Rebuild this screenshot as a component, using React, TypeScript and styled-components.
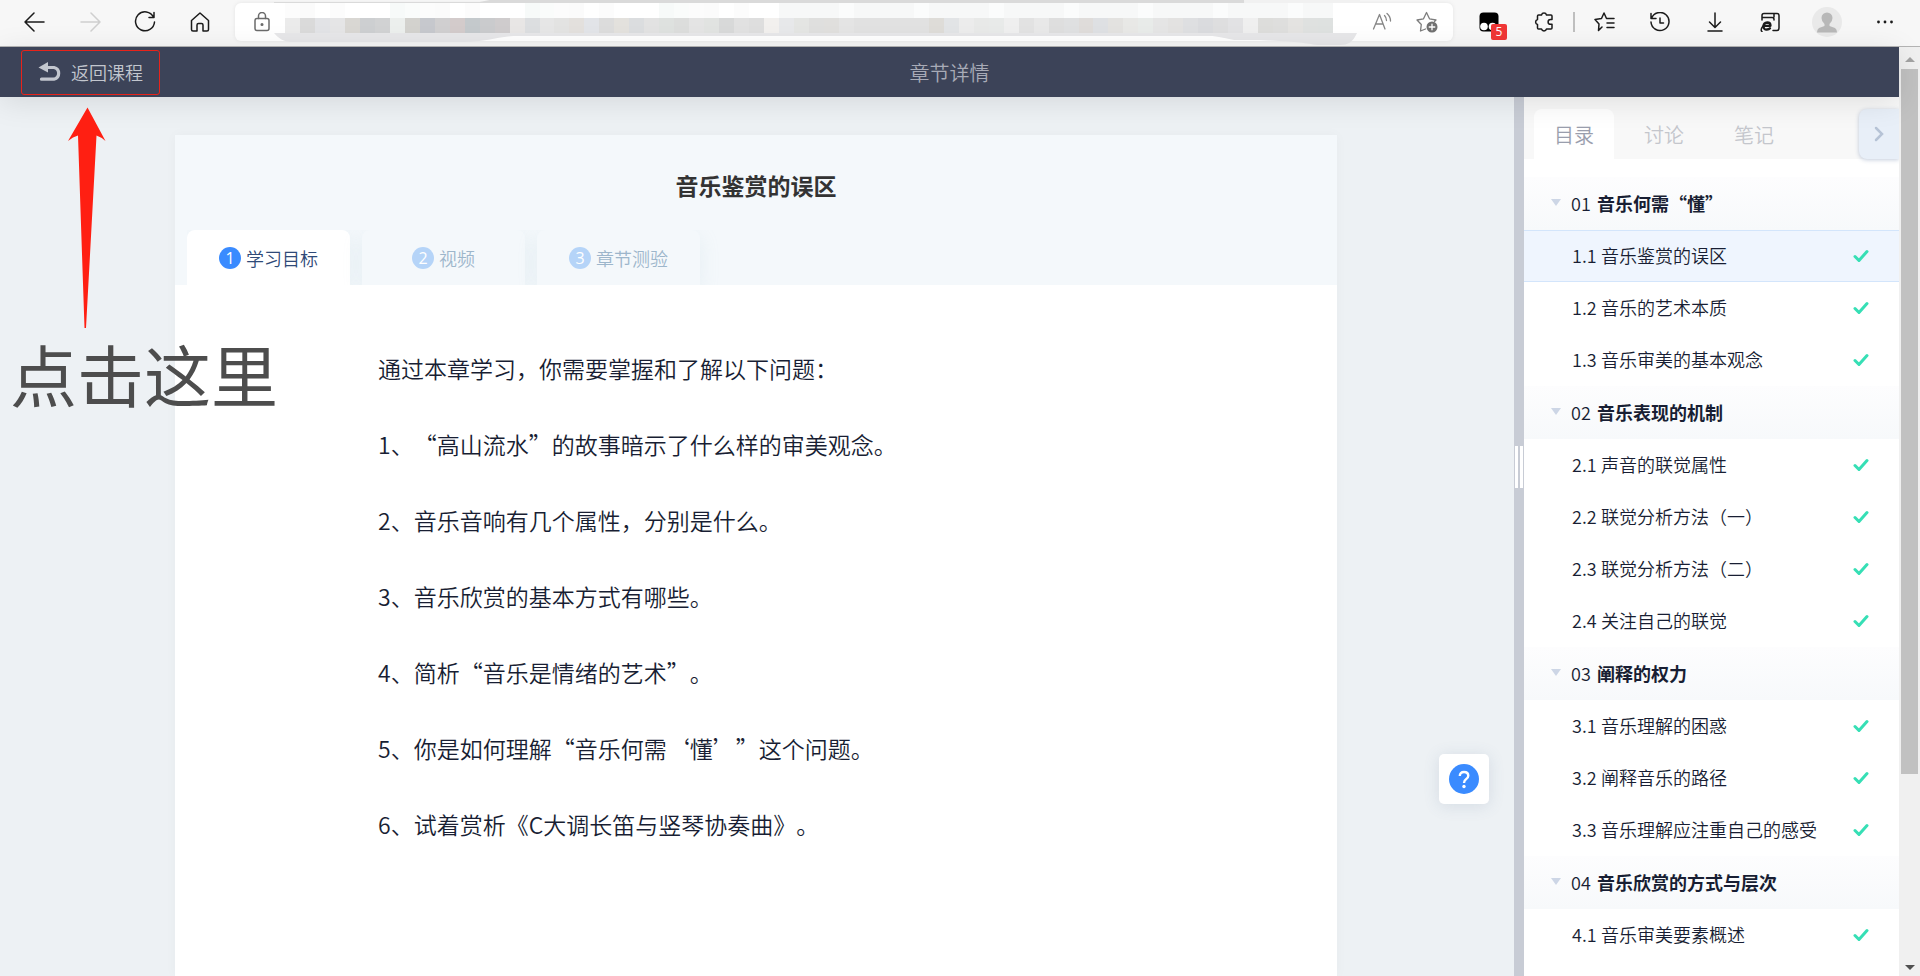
import React from "react";
import styled, { createGlobalStyle } from "styled-components";

const GlobalStyle = createGlobalStyle`
  * { box-sizing: border-box; }
  body {
    margin: 0;
    font-family: "Noto Sans CJK SC", "Noto Sans", sans-serif;
    font-weight: 350;
    text-spacing-trim: space-all;
    color: #181e33;
    overflow: hidden;
  }
  button { font: inherit; color: inherit; background: none; border: 0; padding: 0; cursor: pointer; }
  ul, ol { list-style: none; margin: 0; padding: 0; }
  h1, h2, h3, p { margin: 0; }
`;

const Window = styled.div`
  display: flex;
  flex-direction: column;
  height: 100vh;
  overflow: hidden;
`;

/* ---------- browser toolbar ---------- */

const Toolbar = styled.div`
  display: flex;
  align-items: center;
  flex: none;
  height: 47px;
  padding: 0 8px 2px 7px;
  background: #f7f7f7;
  border-bottom: 1px solid #b4b4b4;
`;

const ToolButton = styled.button<{ $width?: number; $color?: string }>`
  display: flex;
  align-items: center;
  justify-content: center;
  flex: none;
  width: ${(p) => p.$width ?? 55}px;
  height: 36px;
  color: ${(p) => p.$color ?? "#1b1b1b"};
  position: relative;
`;

const AddressBar = styled.div`
  display: flex;
  align-items: center;
  flex: 1;
  min-width: 0;
  height: 38px;
  margin: 0 8px;
  padding: 0 4px 0 17px;
  background: #fff;
  border-radius: 6px;
  box-shadow: 0 0 4px rgba(0, 0, 0, 0.08);
`;

const Mosaic = styled.svg`
  flex: 1;
  min-width: 0;
  height: 46px;
  margin-left: 2px;
`;

const ToolDivider = styled.span`
  flex: none;
  width: 2px;
  height: 20px;
  margin: 0 2px;
  background: #bfbfbf;
`;

const Badge = styled.span`
  position: absolute;
  left: 30px;
  top: 20px;
  width: 16px;
  height: 16px;
  border-radius: 2px;
  background: #f03636;
  color: #fff;
  font: 400 12px/16px "Open Sans", sans-serif;
  text-align: center;
`;

const Avatar = styled.span`
  display: flex;
  align-items: flex-end;
  justify-content: center;
  width: 30px;
  height: 30px;
  border-radius: 50%;
  background: #e9e9e9;
  padding-bottom: 4px;
`;

/* ---------- page frame ---------- */

const Viewport = styled.div`
  display: flex;
  flex: 1;
  min-height: 0;
`;

const Page = styled.div`
  display: flex;
  flex-direction: column;
  flex: 1;
  min-width: 0;
  position: relative;
`;

const ScrollTrack = styled.div`
  display: flex;
  flex-direction: column;
  align-items: center;
  flex: none;
  width: 21px;
  padding: 8px 0 6px;
  background: #f0f0f0;
`;

const ScrollThumb = styled.div`
  width: 17px;
  height: 77%;
  margin-top: 7px;
  background: #c1c1c1;
`;

const ScrollArrow = styled.span<{ $down?: boolean }>`
  border: 5px solid transparent;
  border-bottom-color: ${(p) => (p.$down ? "transparent" : "#a3a3a3")};
  border-top-color: ${(p) => (p.$down ? "#505050" : "transparent")};
  border-top-width: ${(p) => (p.$down ? 5 : 0)}px;
  border-bottom-width: ${(p) => (p.$down ? 0 : 5)}px;
  margin-top: ${(p) => (p.$down ? "auto" : "2px")};
`;

const Header = styled.header`
  display: grid;
  grid-template-columns: 1fr auto 1fr;
  align-items: center;
  flex: none;
  height: 50px;
  padding: 0 21px;
  background: #3c4358;
  box-shadow: 0 5px 30px rgba(0, 0, 0, 0.1);
  position: relative;
  z-index: 1;
`;

const BackButton = styled.button`
  display: flex;
  align-items: center;
  justify-self: start;
  gap: 8px;
  height: 45px;
  padding: 0 16px;
  border: 1px solid #e8231a;
  border-radius: 3px;
  color: #c2c6ce;
  font-size: 18px;
  line-height: 24px;
`;

const HeaderTitle = styled.h1`
  padding-top: 2px;
  font-size: 20px;
  line-height: 28px;
  font-weight: 350;
  color: #a8abb7;
`;

const Columns = styled.div`
  display: flex;
  flex: 1;
  min-height: 0;
`;

/* ---------- lesson ---------- */

const Main = styled.main`
  flex: 1;
  min-width: 0;
  padding: 38px 26px 0 24px;
  background: #edf1f4;
  overflow: hidden;
  position: relative;
`;

const Card = styled.article`
  display: flex;
  flex-direction: column;
  max-width: 1162px;
  height: 100%;
  margin: 0 auto;
  background: #fff;
  box-shadow: 0 0 12px rgba(0, 0, 0, 0.03);
`;

const CardHead = styled.div`
  display: flex;
  flex-direction: column;
  justify-content: space-between;
  height: 150px;
  padding: 33px 12px 0;
  background: #f4f8fb;
`;

const LessonTitle = styled.h2`
  font-size: 23px;
  line-height: 34px;
  font-weight: 700;
  text-align: center;
  color: #333;
`;

const StepTabs = styled.div`
  display: flex;
  gap: 12px;
  overflow: hidden;
  padding-right: 20px;
`;

const StepTab = styled.button<{ $active?: boolean }>`
  display: flex;
  align-items: center;
  justify-content: center;
  gap: 5px;
  width: 163px;
  height: 55px;
  border-radius: 8px 8px 0 0;
  background: ${(p) => (p.$active ? "#fff" : "#f4f8fb")};
  color: ${(p) => (p.$active ? "#2f4a78" : "#9db6cb")};
  font-size: 18px;
  line-height: 24px;
  box-shadow: 0 6px 20px rgba(160, 190, 205, 0.16);
`;

const StepNumber = styled.span<{ $active?: boolean }>`
  width: 22px;
  height: 22px;
  border-radius: 50%;
  background: ${(p) => (p.$active ? "#3a8bff" : "#b5d4f8")};
  color: #fff;
  font: 400 16px/22px "Open Sans", sans-serif;
  text-align: center;
`;

const Body = styled.div`
  display: flex;
  flex-direction: column;
  gap: 38px;
  padding: 64px 203px 0;
  font-size: 23px;
  line-height: 38px;
`;

const HelpButton = styled.button`
  display: flex;
  align-items: center;
  justify-content: center;
  position: absolute;
  right: 25px;
  bottom: 172px;
  width: 50px;
  height: 50px;
  border-radius: 5px;
  background: #fff;
  box-shadow: 0 2px 16px rgba(90, 110, 150, 0.16);
`;

/* ---------- splitter and side panel ---------- */

const Splitter = styled.div`
  display: flex;
  justify-content: center;
  gap: 2px;
  flex: none;
  width: 10px;
  padding-top: 349px;
  background: #c8ccd5;
`;

const Grip = styled.span`
  width: 3px;
  height: 42px;
  background: #fff;
`;

const Side = styled.aside`
  flex: none;
  width: 375px;
  background: #fff;
  overflow: hidden;
`;

const SideTabs = styled.div`
  display: flex;
  gap: 10px;
  height: 62px;
  padding: 12px 0 0 10px;
  background: #f8f8f8;
`;

const SideTab = styled.button<{ $active?: boolean }>`
  width: 80px;
  height: 50px;
  padding-top: 2px;
  border-radius: 8px 8px 0 0;
  background: ${(p) => (p.$active ? "#fff" : "transparent")};
  color: ${(p) => (p.$active ? "#9a9ead" : "#c4c6cc")};
  font-size: 20px;
  line-height: 28px;
`;

const Collapse = styled.button`
  display: flex;
  align-items: center;
  justify-content: center;
  width: 40px;
  height: 50px;
  margin-left: auto;
  border-radius: 8px 0 0 8px;
  background: #e8eff8;
  box-shadow: 0 1px 4px rgba(60, 90, 140, 0.3);
  color: #b6c3d6;
`;

const Chapters = styled.ol`
  padding-top: 18px;
`;

const ChapterHead = styled.button`
  display: flex;
  align-items: center;
  width: 100%;
  height: 53px;
  padding: 0 0 2px 27px;
  background: linear-gradient(#fdfdfe, #f7f9fb);
  font-size: 18px;
  line-height: 24px;
`;

const Caret = styled.span`
  width: 10px;
  margin-right: 10px;
  border: 5px solid transparent;
  border-top: 7px solid #cdd6e6;
  border-bottom: 0;
`;

const ChapterNumber = styled.span`
  width: 26px;
  text-align: left;
`;

const ChapterName = styled.h3`
  font-size: 18px;
  line-height: 24px;
  font-weight: 700;
`;

const Lesson = styled.a<{ $active?: boolean }>`
  display: flex;
  align-items: center;
  height: 52px;
  padding: 0 30px 2px 48px;
  border: solid ${(p) => (p.$active ? "#d3e5fb" : "transparent")};
  border-width: 1px 0;
  background: ${(p) => (p.$active ? "#eff5fe" : "#fff")};
  color: inherit;
  text-decoration: none;
  font-size: 18px;
  line-height: 24px;
`;

const LessonNumber = styled.span`
  width: 29px;
`;

const Tick = styled.svg`
  margin-left: auto;
`;

/* ---------- annotation ---------- */

const Annotation = styled.div`
  position: absolute;
  left: 10px;
  top: 60px;
  z-index: 2;
  pointer-events: none;
  color: #4d4d4d;
  font-size: 67px;
  font-weight: 400;
  line-height: 88px;
`;

const Arrow = styled.svg`
  display: block;
  margin-left: 57px;
`;

const smudge = [
  "#ebebeb", "#dadada", "#e2e3e6", "#e5e5e6", "#d9d7d3", "#cdcfd1", "#d1d2d3", "#ecefed",
  "#d3d2ce", "#c6c8cd", "#d0cfd0", "#d3cbcb", "#c4c9cc", "#cacbcd", "#cfcccd", "#e8e6e5",
  "#dcdee0", "#e6e6e6", "#e3e3e2", "#e3e0dd", "#e2e4e8", "#dcdcdc", "#e3e1dd", "#dbdddf",
  "#e2e2e2", "#dee1df", "#dcdddc", "#e4e4e4", "#e1e3e1", "#d8d9d9", "#e1e1e1", "#dedede",
  "#f2f0ee", "#e7e8ea", "#e4e5e3", "#dfdfde", "#e0dfdd", "#e4e4e4", "#e1e1e1", "#e1e1e1",
  "#e1e1e1", "#e1e1e1", "#e1e1e1", "#dedcd8", "#e2e4e6", "#ececec", "#e8e9e8", "#e8eae9",
  "#efefef", "#e2e2e2", "#e8e8e8", "#dedede", "#dfe0e1", "#dfdcda", "#dee0e3", "#e3e2e0",
  "#e8e8e6", "#e8ebe9", "#e5e5e5", "#e3e2e1", "#dedfe1", "#dadbde", "#dededf", "#e2e2e4",
  "#efefef", "#dddddb", "#dededd", "#e4e3e1", "#dfe1e0", "#dee1e0",
];
const glow = ["#fcfcfc", "#fbfbfb", "#ffffff", "#fcfcfc", "#ffffff", "#ffffff", "#ffffff", "#f7faf9", "#fafcfb"];

const Hidden = () => (
  <Mosaic viewBox="0 -1 1088 46" preserveAspectRatio="none" aria-hidden="true">
    <path d="M0 2H206L216 0H972V3H0Z" fill="#dadada" />
    <path d="M972 0H1090V3H972Z" fill="#f1f1f1" />
    {smudge.map((c, i) => (
      <g key={i} shapeRendering="crispEdges">
        <rect x={11 + i * 15} y={3} width={15} height={15} fill={i > 32 ? (i % 5 === 2 ? "#fbfcfc" : "#f7f8f8") : glow[i % 9]} />
        <rect x={11 + i * 15} y={18} width={15} height={15} fill={c} />
      </g>
    ))}
    <path d="M0 33H1085C1081 42 1076 45 1068 45H1045C1030 43 1022 40 962 40C955 39 950 37 940 36H240C222 37 212 42 190 42H18C10 42 4 38 0 33Z" fill="#e7e7e9" />
  </Mosaic>
);

const stroke = { fill: "none", stroke: "currentColor", strokeWidth: 1.5, strokeLinecap: "round", strokeLinejoin: "round" } as const;

const Check = () => (
  <Tick width="16" height="14" viewBox="0 0 16 14" aria-label="已完成">
    <path d="M2 8.5L6 12.5L14 3.5" fill="none" stroke="#36dfb5" strokeWidth="3" strokeLinecap="round" />
  </Tick>
);

type Item = { no: string; name: string };
const chapters: (Item & { lessons: Item[] })[] = [
  { no: "01", name: "音乐何需“懂”", lessons: [
    { no: "1.1", name: "音乐鉴赏的误区" },
    { no: "1.2", name: "音乐的艺术本质" },
    { no: "1.3", name: "音乐审美的基本观念" },
  ] },
  { no: "02", name: "音乐表现的机制", lessons: [
    { no: "2.1", name: "声音的联觉属性" },
    { no: "2.2", name: "联觉分析方法（一）" },
    { no: "2.3", name: "联觉分析方法（二）" },
    { no: "2.4", name: "关注自己的联觉" },
  ] },
  { no: "03", name: "阐释的权力", lessons: [
    { no: "3.1", name: "音乐理解的困惑" },
    { no: "3.2", name: "阐释音乐的路径" },
    { no: "3.3", name: "音乐理解应注重自己的感受" },
  ] },
  { no: "04", name: "音乐欣赏的方式与层次", lessons: [{ no: "4.1", name: "音乐审美要素概述" }] },
];

const steps = ["学习目标", "视频", "章节测验"];
const paragraphs = [
  "通过本章学习，你需要掌握和了解以下问题：",
  "1、“高山流水”的故事暗示了什么样的审美观念。",
  "2、音乐音响有几个属性，分别是什么。",
  "3、音乐欣赏的基本方式有哪些。",
  "4、简析“音乐是情绪的艺术”。",
  "5、你是如何理解“音乐何需‘懂’”这个问题。",
  "6、试着赏析《C大调长笛与竖琴协奏曲》。",
];

const BrowserBar = () => (
  <Toolbar>
    <ToolButton aria-label="后退">
      <svg width="22" height="20" viewBox="0 0 22 20" {...stroke}><path d="M10 1L1 10L10 19M1 10H20" /></svg>
    </ToolButton>
    <ToolButton aria-label="前进" $color="#cfcfcf">
      <svg width="22" height="20" viewBox="0 0 22 20" {...stroke}><path d="M12 1L21 10L12 19M21 10H2" /></svg>
    </ToolButton>
    <ToolButton aria-label="刷新">
      <svg width="22" height="22" viewBox="0 0 22 22" {...stroke}><path d="M19.5 6A9.5 9.5 0 1 0 20.5 11M20 1.5V6.5H15" /></svg>
    </ToolButton>
    <ToolButton aria-label="主页">
      <svg width="20" height="20" viewBox="0 0 20 20" {...stroke}><path d="M1.5 8.5L10 1L18.5 8.5V17.5Q18.5 19 17 19H13V13Q13 11.5 11.5 11.5H8.5Q7 11.5 7 13V19H3Q1.5 19 1.5 17.5Z" /></svg>
    </ToolButton>
    <AddressBar>
      <svg width="20" height="20" viewBox="0 0 20 20" {...stroke} stroke="#6b6b6b">
        <rect x="3" y="6.5" width="14" height="12" rx="2" />
        <path d="M6.5 6.5V4A3.5 3.5 0 0 1 13.5 4V6.5" />
        <circle cx="10" cy="12.5" r="0.8" fill="#6b6b6b" />
      </svg>
      <Hidden />
      <ToolButton aria-label="朗读此页" $width={44} $color="#868686">
        <svg width="21" height="20" viewBox="0 0 21 20" {...stroke} strokeWidth={1.3}>
          <path d="M1.5 17L7.5 2.5L13 17M3.5 12H11M12.500 3.500Q14.500 5.500 14.500 8.500M15 1.500Q18.500 4.500 18.500 9" />
        </svg>
      </ToolButton>
      <ToolButton aria-label="收藏此页" $width={45} $color="#7d7d7d">
        <svg width="22" height="22" viewBox="0 0 22 22" {...stroke} strokeWidth={1.3}>
          <path d="M9.5 18L4.5 20L5.3 13.5L1 9L7.5 7.8L10.5 1.5L13.5 7.8L20 9L18.5 10.5" />
          <circle cx="16" cy="16" r="5.5" fill="#717171" stroke="none" />
          <path d="M16 13.2V18.8M13.2 16H18.8" stroke="#fff" />
        </svg>
      </ToolButton>
    </AddressBar>
    <ToolButton aria-label="脚本扩展">
      <svg width="20" height="20" viewBox="0 0 20 20">
        <rect x="0.5" y="0.5" width="19" height="19" rx="4" fill="#000" />
        <circle cx="5" cy="14.5" r="3.8" fill="#fff" />
        <circle cx="13.5" cy="14.5" r="3.8" fill="#fff" />
      </svg>
      <Badge>5</Badge>
    </ToolButton>
    <ToolButton aria-label="扩展">
      <svg width="20" height="20" viewBox="0 0 20 20" {...stroke}>
        <path d="M4.500 3H7.500A2.600 2.600 0 0 1 12.500 3H17Q18 3 18 4V7.500H16.500A2.400 2.400 0 0 0 16.500 12.300H18V16Q18 17 17 17H12.500A2.600 2.600 0 0 1 7.500 17H4.500Q3.500 17 3.500 16V12.500A2.600 2.600 0 0 1 3.500 7.500V4Q3.500 3 4.500 3Z" />
      </svg>
    </ToolButton>
    <ToolDivider />
    <ToolButton aria-label="收藏夹">
      <svg width="22" height="20" viewBox="0 0 22 20" {...stroke}>
        <path d="M8 15L4.500 18.500L5 12L1 7.500L7.500 6.500L10 1L12.500 6.500H20M13 11H20M13 15.500H20" />
      </svg>
    </ToolButton>
    <ToolButton aria-label="历史记录">
      <svg width="22" height="20" viewBox="0 0 22 20" {...stroke}>
        <path d="M2.500 6.500A9 9 0 1 1 2 10M2 1.500V6.500H7M11 6V11H14.500" />
      </svg>
    </ToolButton>
    <ToolButton aria-label="下载">
      <svg width="16" height="20" viewBox="0 0 16 20" {...stroke}><path d="M8 1V15M2.500 10L8 15.500L13.500 10M1 19H15" /></svg>
    </ToolButton>
    <ToolButton aria-label="IE 模式">
      <svg width="20" height="20" viewBox="0 0 20 20" {...stroke}>
        <path d="M2 8V3.500Q2 1.500 4 1.500H17Q19 1.500 19 3.500V16Q19 18.500 17 18.500H13M2 5.500H12Q14 5.500 14 7.500V8M14 1.500V5" />
        <path d="M3.500 13.800H10.500Q10.500 10.500 7.300 10.500Q3.500 10.800 3.500 14.500Q3.800 18 7 17.500Q9 17.500 10 16.300" strokeWidth="2.300" />
        <path d="M2 19.500Q0 18 3 14" />
      </svg>
    </ToolButton>
    <ToolButton aria-label="个人资料" $width={60}>
      <Avatar>
        <svg width="22" height="21" viewBox="0 0 22 21" fill="#b8b8b8">
          <path d="M11 0.500A5.500 5.500 0 0 1 16.500 6Q16.500 9.500 13.500 12V14L19 16Q21 17 21 20.500H1Q1 17 3 16L8.500 14V12Q5.500 9.500 5.500 6A5.500 5.500 0 0 1 11 0.500Z" />
        </svg>
      </Avatar>
    </ToolButton>
    <ToolButton aria-label="更多">
      <svg width="18" height="4" viewBox="0 0 18 4" fill="currentColor"><circle cx="2.500" cy="2" r="1.400" /><circle cx="9" cy="2" r="1.400" /><circle cx="15.500" cy="2" r="1.400" /></svg>
    </ToolButton>
  </Toolbar>
);

export default function App() {
  return (
    <Window>
      <GlobalStyle />
      <BrowserBar />
      <Viewport>
        <Page>
          <Header>
            <BackButton>
              <svg width="25" height="20" viewBox="0 0 25 20">
                <path d="M0.500 5.500L10 0V10.500Z" fill="currentColor" />
                <path d="M8 5.500H16A6 6 0 0 1 16 17.200H3.500" fill="none" stroke="currentColor" strokeWidth="3.200" strokeLinecap="round" />
              </svg>
              返回课程
            </BackButton>
            <HeaderTitle>章节详情</HeaderTitle>
          </Header>
          <Annotation>
            <Arrow width="40" height="222" viewBox="0 0 40 222">
              <path d="M20.500 0.500L38.500 34Q34 30 29.500 28.500L19 221H17.500L11 28.500Q6 29.500 1 34Z" fill="#ff1f12" />
            </Arrow>
            点击这里
          </Annotation>
          <Columns>
            <Main>
              <Card>
                <CardHead>
                  <LessonTitle>音乐鉴赏的误区</LessonTitle>
                  <StepTabs role="tablist">
                    {steps.map((s, i) => (
                      <StepTab key={s} role="tab" aria-selected={i === 0} $active={i === 0}>
                        <StepNumber $active={i === 0}>{i + 1}</StepNumber>
                        {s}
                      </StepTab>
                    ))}
                  </StepTabs>
                </CardHead>
                <Body>
                  {paragraphs.map((p) => <p key={p}>{p}</p>)}
                </Body>
              </Card>
              <HelpButton aria-label="帮助">
                <svg width="30" height="30" viewBox="0 0 30 30">
                  <circle cx="15" cy="15" r="15" fill="#3a8bff" />
                  <path d="M10.800 12Q10.800 8 15 8Q19.300 8 19.300 11.800Q19.300 13.800 17 15.200Q15 16.500 15 19" fill="none" stroke="#fff" strokeWidth="2.400" />
                  <circle cx="15" cy="22.500" r="1.700" fill="#fff" />
                </svg>
              </HelpButton>
            </Main>
            <Splitter><Grip /><Grip /></Splitter>
            <Side>
              <SideTabs role="tablist">
                <SideTab role="tab" aria-selected $active>目录</SideTab>
                <SideTab role="tab">讨论</SideTab>
                <SideTab role="tab">笔记</SideTab>
                <Collapse aria-label="收起">
                  <svg width="10" height="16" viewBox="0 0 10 16"><path d="M2 2L8 8L2 14" fill="none" stroke="currentColor" strokeWidth="2.500" strokeLinecap="round" /></svg>
                </Collapse>
              </SideTabs>
              <Chapters>
                {chapters.map((c) => (
                  <li key={c.no}>
                    <ChapterHead>
                      <Caret />
                      <ChapterNumber>{c.no}</ChapterNumber>
                      <ChapterName>{c.name}</ChapterName>
                    </ChapterHead>
                    <ol>
                      {c.lessons.map((l) => (
                        <li key={l.no}>
                          <Lesson href={`#${l.no}`} $active={l.no === "1.1"}>
                            <LessonNumber>{l.no}</LessonNumber>
                            {l.name}
                            <Check />
                          </Lesson>
                        </li>
                      ))}
                    </ol>
                  </li>
                ))}
              </Chapters>
            </Side>
          </Columns>
        </Page>
        <ScrollTrack>
          <ScrollArrow />
          <ScrollThumb />
          <ScrollArrow $down />
        </ScrollTrack>
      </Viewport>
    </Window>
  );
}
